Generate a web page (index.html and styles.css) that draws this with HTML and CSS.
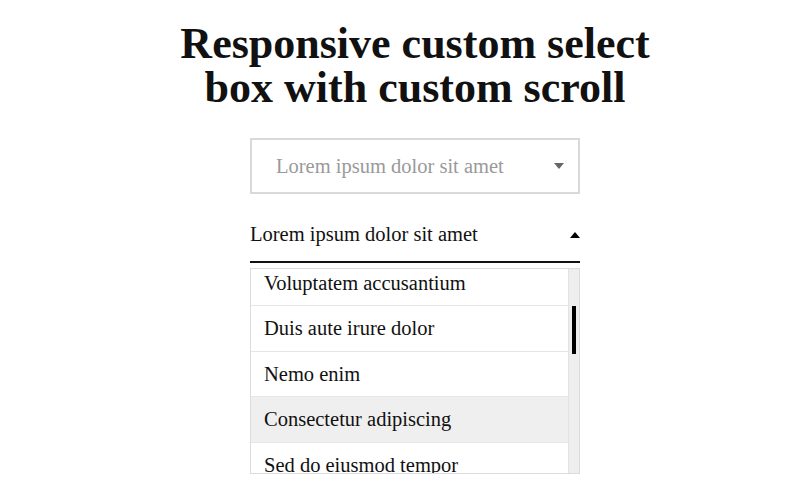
FILE: index.html
```html
<!DOCTYPE html>
<html lang="en">
<head>
<meta charset="utf-8">
<title>Responsive custom select box</title>
<link rel="stylesheet" href="styles.css">
</head>
<body>
<main class="page">
  <h1 class="title">Responsive custom select<br>box with custom scroll</h1>
  <div class="select select-closed">
    <span class="select-value">Lorem ipsum dolor sit amet</span>
    <span class="arrow arrow-down"></span>
  </div>
  <div class="select-open">
    <div class="select-head">
      <span class="select-value">Lorem ipsum dolor sit amet</span>
      <span class="arrow arrow-up"></span>
    </div>
    <div class="list">
      <div class="viewport">
        <ul class="options">
          <li class="option">Voluptatem accusantium</li>
          <li class="option">Duis aute irure dolor</li>
          <li class="option">Nemo enim</li>
          <li class="option option-hover">Consectetur adipiscing</li>
          <li class="option">Sed do eiusmod tempor</li>
        </ul>
      </div>
      <div class="track"><div class="thumb"></div></div>
    </div>
  </div>
</main>
</body>
</html>
```

FILE: styles.css
```css
html, body {
  margin: 0;
  padding: 0;
  background: #fff;
}
body {
  font-family: "Liberation Serif", "DejaVu Serif", serif;
  color: #111;
}
.page {
  width: 330px;
  margin: 0 auto;
  padding: 22px 0 0 30px;
  display: flex;
  flex-direction: column;
  align-items: center;
}
.title {
  margin: 0;
  width: 600px;
  text-align: center;
  font-size: 44px;
  line-height: 44px;
  font-weight: bold;
  color: #111;
}
.select {
  box-sizing: border-box;
  width: 330px;
  height: 56px;
  margin-top: 28px;
  border: 2px solid #d9d9d9;
  display: flex;
  align-items: center;
  justify-content: space-between;
  padding: 0 14px 0 24px;
}
.select-closed .select-value {
  color: #999;
  font-size: 20.5px;
}
.arrow {
  width: 0;
  height: 0;
  border-left: 5px solid transparent;
  border-right: 5px solid transparent;
}
.arrow-down {
  border-top: 6px solid #666;
}
.arrow-up {
  border-bottom: 6px solid #000;
}
.select-open {
  width: 330px;
  margin-top: 14px;
}
.select-head {
  box-sizing: border-box;
  height: 55px;
  display: flex;
  align-items: center;
  justify-content: space-between;
  border-bottom: 2px solid #111;
  font-size: 20.5px;
}
.list {
  box-sizing: border-box;
  height: 206px;
  margin-top: 5px;
  border: 1px solid #dcdcdc;
  display: flex;
}
.viewport {
  flex: 1;
  overflow: hidden;
}
.options {
  list-style: none;
  margin: -8px 0 0 0;
  padding: 0;
}
.option {
  box-sizing: border-box;
  height: 45.4px;
  line-height: 44px;
  padding-left: 13px;
  border-bottom: 1px solid #e6e6e6;
  font-size: 20.5px;
  color: #111;
}
.option-hover {
  background: #efefef;
}
.track {
  width: 10px;
  background: #eeeeee;
  border-left: 1px solid #e2e2e2;
  position: relative;
}
.thumb {
  position: absolute;
  left: 3px;
  top: 37px;
  width: 4px;
  height: 48px;
  background: #000;
}
```
